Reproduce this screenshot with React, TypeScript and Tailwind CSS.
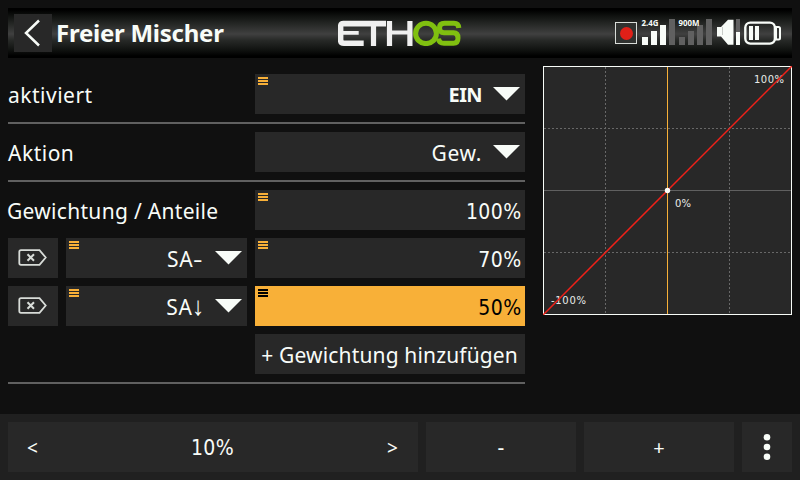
import React from "react";

const Burger = ({ dark = false }: { dark?: boolean }) => (
  <span className="flex flex-col gap-px pl-[3px] pt-[3px]">
    {[0, 1, 2].map((i) => (
      <span key={i} className={dark ? "h-0.5 w-2.5 bg-black" : "h-0.5 w-2.5 bg-[#f8b038]"} />
    ))}
  </span>
);

const Caret = () => (
  <svg className="mr-[5px] mt-[13px] shrink-0" width="27" height="14" viewBox="0 0 27 14">
    <path d="M0 0H27L13.5 13.5Z" fill="#f8fcf8" />
  </svg>
);

const numeric = "font-['DejaVu_Sans_Condensed','DejaVu_Sans',sans-serif] text-[21px] font-stretch-condensed tracking-[0.4px]";

type FieldProps = {
  text: React.ReactNode;
  burger?: boolean;
  select?: boolean;
  active?: boolean;
  width?: string;
  textClass?: string;
};

const Field = ({ text, burger = true, select = false, active = false, width = "w-[270px]", textClass = "pr-[11px] tracking-[0.6px]" }: FieldProps) => (
  <div className={`${width} ${active ? "bg-[#f8b038] text-black" : "bg-[#282828]"} flex h-10 items-start`}>
    {burger && <Burger dark={active} />}
    <span className={`ml-auto whitespace-pre pt-1 leading-[34px] ${textClass}`}>{text}</span>
    {select && <Caret />}
  </div>
);

const Value = ({ text, active = false }: { text: string; active?: boolean }) => (
  <Field text={text} active={active} textClass={`${numeric} mt-px pr-[3.5px]`} />
);

const Row = ({ label, labelClass = "tracking-[0.5px]", children }: { label: string; labelClass?: string; children: React.ReactNode }) => (
  <div className="flex h-10 justify-between">
    <span className={`whitespace-nowrap pt-1 leading-[34px] ${labelClass}`}>{label}</span>
    {children}
  </div>
);

const Rule = () => <div className="my-2 h-0.5 bg-[#606060]" />;

const DeleteButton = () => (
  <div className="flex h-10 w-[50px] bg-[#282828]">
    <svg width="50" height="40" viewBox="0 0 50 40" fill="none" stroke="#d8dcd8">
      <path d="M13 12.2H31.5L37.7 19.5L31.5 26.8H13Q11.3 26.8 11.3 25V14Q11.3 12.2 13 12.2Z" strokeWidth="1.8" />
      <path d="M19.5 16.2L26 22.8M26 16.2L19.5 22.8" strokeWidth="2" />
    </svg>
  </div>
);

const Logo = () => (
  <svg width="124" height="26" viewBox="0 0 124 26" fill="none">
    <g stroke="#f0f0f0">
      <path d="M48 3.6H5.5Q2.6 3.6 2.6 7V19.5Q2.6 23.2 6 23.2H25.7" strokeWidth="5.6" />
      <path d="M3 12.8H20.7M51.5 12.5H72" strokeWidth="3.8" />
      <path d="M35.5 3V26M51.5 1V26M71.9 1V26" strokeWidth="5.2" />
    </g>
    <g stroke="#80c010" strokeWidth="5">
      <ellipse cx="88" cy="13.4" rx="10.4" ry="10.2" />
      <path d="M120.8 8Q120.5 3.3 116 3.3H106.5Q101.5 3.3 101.5 8Q101.5 12.8 106 12.8H115.5Q120 12.8 120 18Q120 23.3 115.5 23.3H106Q101 23.3 100.5 18.5" />
    </g>
  </svg>
);

const StatusIcons = () => (
  <svg width="170" height="34" viewBox="612 17 170 34">
    <rect x="615.5" y="23.5" width="21" height="21" fill="#303230" stroke="#d8dcd8" />
    <circle cx="626.5" cy="34.5" r="6.5" fill="#e02018" />
    <path d="M642 38h6v8h-6zM651 32h6v14h-6zM660 26h6v20h-6z" fill="#f8fcf8" />
    <path d="M669 20h6v26h-6zM679 38h6v8h-6zM688 32h6v14h-6zM697 26h6v20h-6zM706 20h6v26h-6z" fill="#606060" />
    <g fill="#f8fcf8" fontFamily="Noto Sans, sans-serif" fontSize="8" fontWeight="700">
      <text x="641.5" y="26.5" textLength="17" lengthAdjust="spacingAndGlyphs">2.4G</text>
      <text x="678.5" y="26.5" textLength="21" lengthAdjust="spacingAndGlyphs">900M</text>
    </g>
    <path d="M717 28H721L728 20.7H733.5V45.7H728L721 37.5H717Z" fill="#f8fcf8" />
    <path d="M722.5 28V36" stroke="#c8ccc8" strokeWidth="1" />
    <path d="M736 20h4v13h-4z" fill="#606060" />
    <path d="M736 33h4v13h-4z" fill="#f8fcf8" />
    <rect x="745.3" y="23.6" width="29.6" height="21" rx="5" fill="none" stroke="#f8fcf8" strokeWidth="2.4" />
    <path d="M749 27h4v14h-4zM755 27h4v14h-4z" fill="#f8fcf8" />
    <path d="M776 28H778.5Q780 28 780 29.5V39Q780 40.5 778.5 40.5H776Z" fill="none" stroke="#f8fcf8" strokeWidth="2" />
  </svg>
);

const Chart = () => (
  <svg width="249" height="249" viewBox="0 0 249 249" className="bg-[#282828]">
    <g stroke="#686868" strokeDasharray="2 2">
      <path d="M62.5 1V248M186.5 1V248M1 62.5H248M1 186.5H248" />
    </g>
    <path d="M1 124.5H248" stroke="#606060" />
    <path d="M124.5 1V248" stroke="#f8b038" />
    <rect x="0.5" y="0.5" width="248" height="248" fill="none" stroke="#f8fcf8" />
    <g fill="#e8ece8" fontSize="10" fontFamily="DejaVu Sans, sans-serif">
      <text x="211" y="17" textLength="30">100%</text>
      <text x="132" y="141" textLength="16">0%</text>
      <text x="8" y="238" textLength="35">-100%</text>
    </g>
    <path d="M0 249L249 0" stroke="#f02018" strokeWidth="1.5" />
    <circle cx="124.5" cy="124.5" r="2.7" fill="#f8fcf8" />
  </svg>
);

const key = "flex h-[50px] items-center bg-[#282828]";

export default function App() {
  return (
    <div className="flex h-[480px] w-[800px] flex-col overflow-hidden bg-[#101010] font-['Noto_Sans',sans-serif] text-[21px] text-[#f8fcf8]">
      <header className="mx-2 mt-2 flex h-[50px] shrink-0 items-center bg-[linear-gradient(#000_4%,#101210_16%,#282a28_34%,#404040_52%,#282a28_64%,#101210_84%,#000_96%)] pl-1.5">
        <div className="h-[38px] w-[38px] bg-[#282828]">
          <svg width="38" height="38" viewBox="0 0 38 38" fill="none" stroke="#f8fcf8" strokeWidth="2.5">
            <path d="M25 6.5L12 19L25 31.5" />
          </svg>
        </div>
        <h1 className="ml-1 w-[282px] whitespace-nowrap text-[24px] font-bold leading-[38px] tracking-[-0.25px]">Freier Mischer</h1>
        <Logo />
        <div className="ml-auto mr-2.5">
          <StatusIcons />
        </div>
      </header>

      <main className="flex h-[356px] shrink-0 justify-between px-2 pt-2">
        <section className="w-[517px] pt-2">
          <Row label="aktiviert">
            <Field text="EIN" select textClass="pr-[11px] text-[20px] font-bold tracking-[-0.6px]" />
          </Row>
          <Rule />
          <Row label="Aktion">
            <Field text="Gew." burger={false} select />
          </Row>
          <Rule />
          <div className="flex flex-col gap-2">
            <Row label="Gewichtung / Anteile" labelClass="-ml-px tracking-[0.3px]">
              <Value text="100%" />
            </Row>
            <div className="flex gap-2">
              <DeleteButton />
              <Field
                text={<>SA<span className="inline-block origin-left scale-x-140">-</span></>}
                select
                width="w-[181px]"
                textClass="pr-[14px] tracking-[0.8px]"
              />
              <Value text="70%" />
            </div>
            <div className="flex gap-2">
              <DeleteButton />
              <Field
                text={<>SA<span className="inline-block origin-[50%_70%] scale-x-120 scale-y-125">↓</span></>}
                select
                width="w-[181px]"
                textClass="pr-[11px] tracking-[0.8px]"
              />
              <Value text="50%" active />
            </div>
            <div className="flex justify-end">
              <Field text="+ Gewichtung hinzufügen" burger={false} textClass="pr-[7px] tracking-[0.15px]" />
            </div>
          </div>
          <Rule />
        </section>
        <Chart />
      </main>

      <footer className="flex h-[66px] shrink-0 gap-2 bg-[#202020] px-2 pt-2">
        <div className={`${key} w-[410px] justify-between pl-[19px] pr-5`}>
          <span className="pt-0.5 text-[19px]">&lt;</span>
          <span className={`${numeric} pt-1`}>10%</span>
          <span className="pt-0.5 text-[19px]">&gt;</span>
        </div>
        <div className={`${key} w-[150px] justify-center pt-0.5`}>-</div>
        <div className={`${key} w-[150px] justify-center pt-0.5 text-[20px]`}>+</div>
        <div className={`${key} w-[50px] justify-center`}>
          <svg width="8" height="28" viewBox="0 0 8 28" fill="#f8fcf8">
            <circle cx="4" cy="4.3" r="3.3" />
            <circle cx="4" cy="14" r="3.3" />
            <circle cx="4" cy="23.7" r="3.3" />
          </svg>
        </div>
      </footer>
    </div>
  );
}
